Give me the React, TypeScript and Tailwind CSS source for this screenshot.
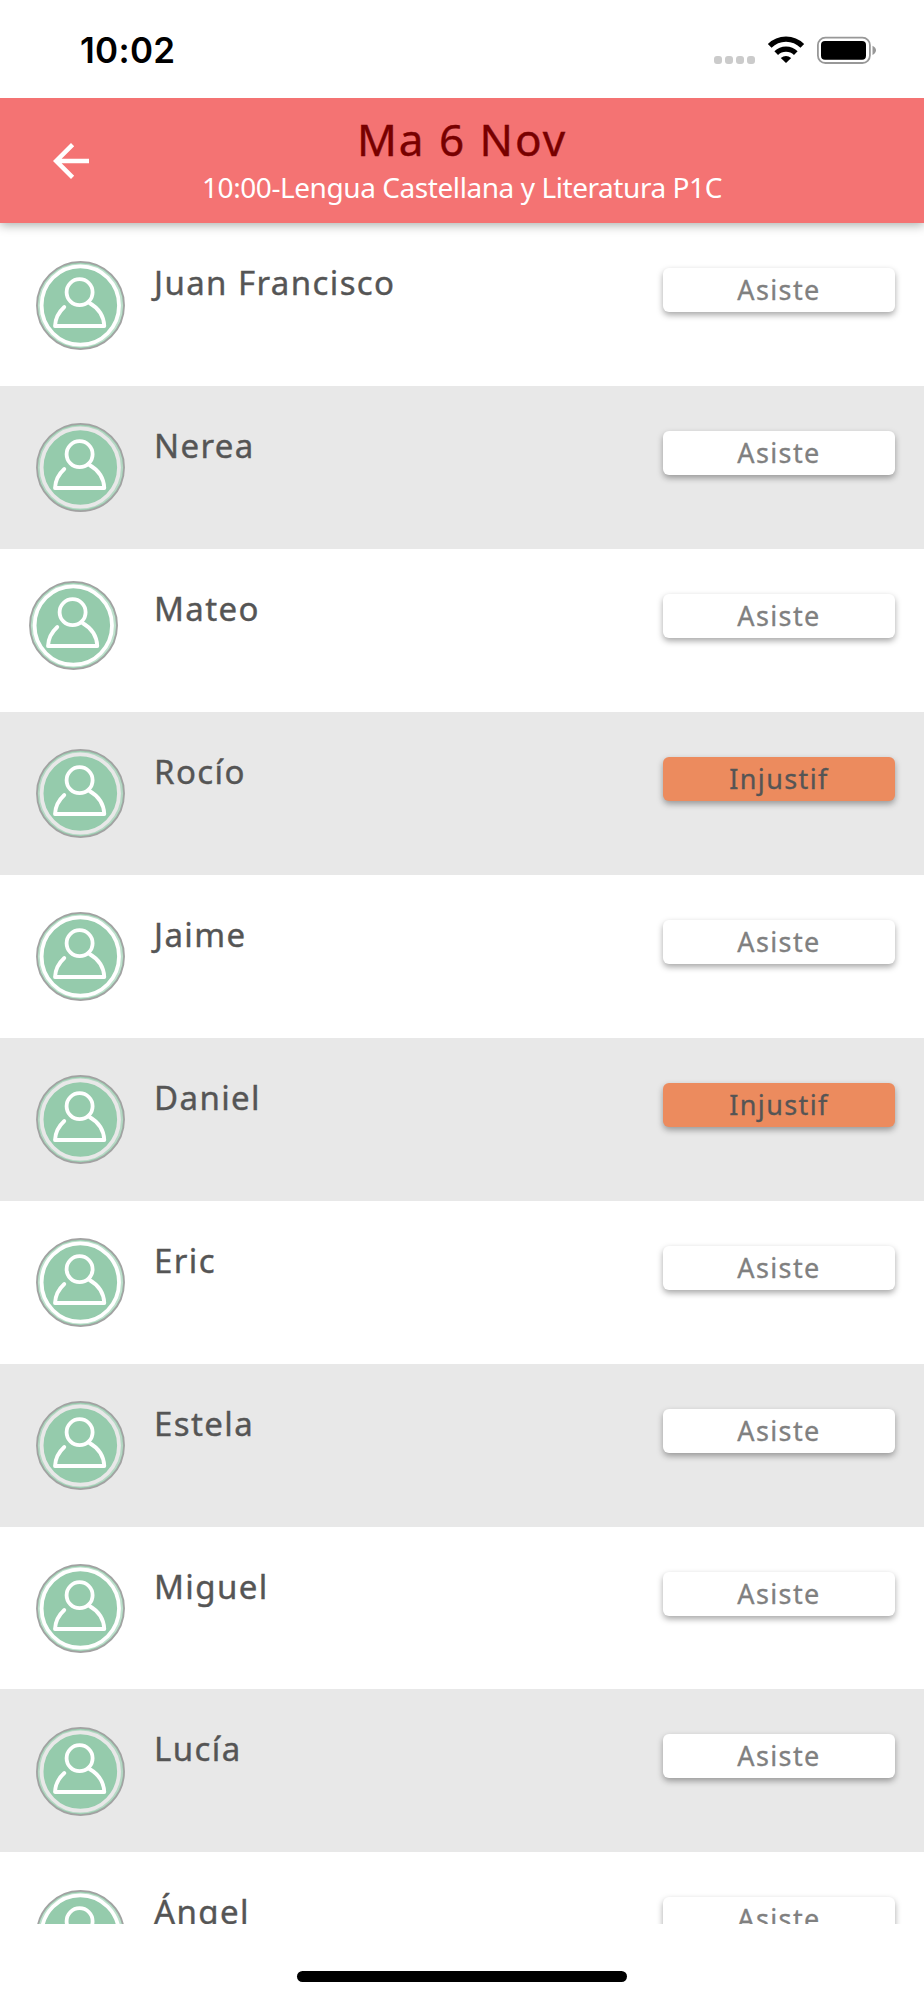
import clsx from 'clsx'

type Status = 'Asiste' | 'Injustif'
type Student = { name:string, status:Status, shifted?:boolean }

const students: Student[] = [
  { name:'Juan Francisco', status:'Asiste' },
  { name:'Nerea', status:'Asiste' },
  { name:'Mateo', status:'Asiste', shifted:true },
  { name:'Rocío', status:'Injustif' },
  { name:'Jaime', status:'Asiste' },
  { name:'Daniel', status:'Injustif' },
  { name:'Eric', status:'Asiste' },
  { name:'Estela', status:'Asiste' },
  { name:'Miguel', status:'Asiste' },
  { name:'Lucía', status:'Asiste' },
  { name:'Ángel', status:'Asiste' },
]

function StatusBar(){
  return (
    <div className="relative z-20 flex h-[98px] shrink-0 items-start bg-white pl-[80px] pr-[47px]">
      <div className="mt-[29px] font-['Inter',sans-serif] text-[35px] font-semibold leading-[42px] tracking-[0.3px]">10:02</div>
      <div className="ml-auto mt-[36px] flex items-start">
        <div className="mt-[20px] flex gap-[3px]">
          {[0,1,2,3].map(i => <span key={i} className="size-[8px] rounded-[3px] bg-[#cbcbcb]"/>)}
        </div>
        <svg className="ml-[12px] h-[28px] w-[38px]" viewBox="0 0 38 28">
          <path d="M2.7 9.8A23 23 0 0 1 35.3 9.8" fill="none" stroke="#000" strokeWidth="5.2"/>
          <path d="M9.2 17.1A14 14 0 0 1 28.8 17.1" fill="none" stroke="#000" strokeWidth="5.2"/>
          <path d="M13.8 22A8.4 8.4 0 0 1 24.2 22L19 27Z"/>
        </svg>
        <svg className="ml-[12px] h-[28px] w-[60px]" viewBox="0 0 60 28">
          <rect x="0.9" y="1.6" width="52" height="25.4" rx="7.5" fill="none" stroke="#989898" strokeWidth="1.8"/>
          <rect x="4" y="5" width="45" height="18.7" rx="4" fill="#000"/>
          <path d="M55.5 9.7q3.5 1.8 3.5 4.6t-3.5 4.6z" fill="#989898"/>
        </svg>
      </div>
    </div>
  )
}

function Header(){
  return (
    <header className="relative z-10 flex h-[125px] shrink-0 bg-[#f47373] shadow-[0_2px_10px_rgba(0,20,10,0.35)]">
      <div className="w-[100px] pl-[44px] pt-[36px]">
        <svg className="size-[54px]" viewBox="0 0 24 24" fill="#fff">
          <path d="M20 11H7.83l5.59-5.59L12 4l-8 8 8 8 1.41-1.41L7.83 13H20v-2z"/>
        </svg>
      </div>
      <div className="flex flex-1 flex-col items-center whitespace-nowrap pr-[100px] pt-[16px]">
        <h1 className="text-[44px] leading-[50px] tracking-[2px] text-[#780000] [-webkit-text-stroke:0.4px_#780000]">Ma 6 Nov</h1>
        <p className="mt-[5px] text-[28px] leading-[36px] tracking-[-0.43px] text-white">10:00-Lengua Castellana y Literatura P1C</p>
      </div>
    </header>
  )
}

function Avatar({ odd }:{ odd:boolean }){
  const ring = odd ? '#e8e8e8' : '#fff'
  return (
    <svg className="size-[89px]" viewBox="0 0 89 89" fill="none">
      <circle cx="44.5" cy="44.5" r="43.5" fill="#95cbac"/>
      <ellipse cx="44.5" cy="44.5" rx="41" ry="40.5" stroke={ring} strokeWidth="3" opacity="0.4"/>
      <ellipse cx="44.3" cy="44.5" rx="38.7" ry="39.2" stroke={ring} strokeWidth="3.8"/>
      <circle cx="44.5" cy="44.5" r="43.6" stroke="#a2a2a2" strokeWidth="1.7"/>
      <g stroke="#fff" strokeWidth="3.8" strokeLinecap="round" strokeLinejoin="round">
        <circle cx="43.6" cy="31.2" r="13"/>
        <path d="M28.3 46Q19.5 54 19 65H68.3Q67.5 50 53.5 42"/>
      </g>
    </svg>
  )
}

function StudentRow({ student, odd }:{ student:Student, odd:boolean }){
  return (
    <li className={clsx('flex h-[162.95px] shrink-0 items-start pr-[29px]', odd ? 'bg-[#e8e8e8]' : 'bg-white')}>
      <div className={clsx('w-[154px]', student.shifted ? 'pl-[29px] pt-[32px]' : 'pl-[36px] pt-[37.5px]')}>
        <Avatar odd={odd}/>
      </div>
      <span className="mt-[40px] text-[33px] leading-[40px] tracking-[1.4px] text-[#555] [-webkit-text-stroke:0.4px_#555]">{student.name}</span>
      <button className={clsx(
        'ml-auto mt-[45px] h-[44px] w-[232px] rounded-[6px] text-[27px] leading-[42px] tracking-[1.4px] shadow-[0_3px_6px_rgba(0,0,0,0.35)]',
        student.status==='Injustif'
          ? 'bg-[#ec8b5e] text-[#555] [-webkit-text-stroke:0.3px_#555]'
          : 'bg-white text-[#808080] [-webkit-text-stroke:0.3px_#808080]'
      )}>
        {student.status}
      </button>
    </li>
  )
}

export default function App(){
  return (
    <main className="flex h-[2000px] w-[924px] flex-col overflow-hidden bg-white font-['Noto_Sans',sans-serif]">
      <StatusBar/>
      <Header/>
      <ul className="flex h-[1701px] shrink-0 flex-col overflow-hidden">
        {students.map((s,i) => <StudentRow key={s.name} student={s} odd={i%2===1}/>)}
      </ul>
      <div className="mx-auto mt-[47px] h-[11px] w-[330px] rounded-full bg-black"/>
    </main>
  )
}
